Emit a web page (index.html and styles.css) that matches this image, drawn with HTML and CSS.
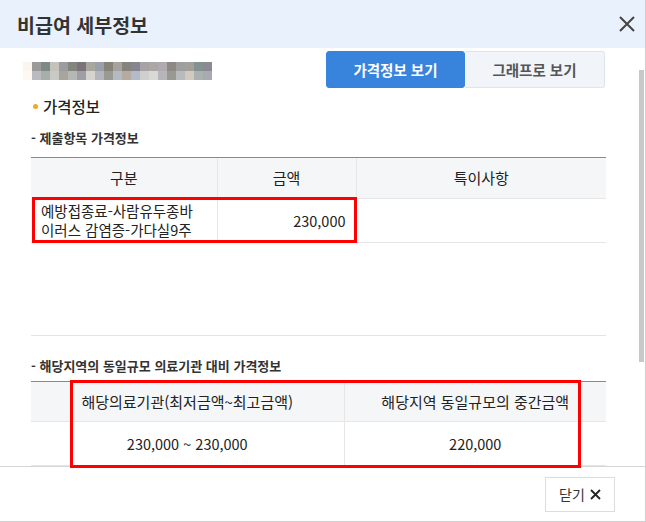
FILE: index.html
```html
<!DOCTYPE html>
<html lang="ko">
<head>
<meta charset="utf-8">
<title>비급여 세부정보</title>
<link rel="stylesheet" href="styles.css">
</head>
<body>
<div class="modal">
  <header class="modal-head">
    <h1 class="modal-title">비급여 세부정보</h1>
    <button class="close-btn" aria-label="닫기">
      <svg width="16" height="16" viewBox="0 0 16 16"><path d="M1 1L15 15M15 1L1 15" stroke="#444" stroke-width="2" fill="none"/></svg>
    </button>
  </header>
  <main class="modal-body">
    <div class="top-row">
      <div class="mosaic" aria-hidden="true"></div>
      <div class="tabs">
        <button class="tab active">가격정보 보기</button>
        <button class="tab">그래프로 보기</button>
      </div>
    </div>
    <h2 class="sec-title">가격정보</h2>
    <h3 class="sub-title">- 제출항목 가격정보</h3>
    <div class="table-wrap">
      <table class="grid t1">
        <colgroup><col class="c1"><col class="c2"><col></colgroup>
        <thead>
          <tr><th>구분</th><th>금액</th><th>특이사항</th></tr>
        </thead>
        <tbody>
          <tr><td class="name">예방접종료-사람유두종바<br>이러스 감염증-가다실9주</td><td class="amt">230,000</td><td></td></tr>
        </tbody>
      </table>
    </div>
    <h3 class="sub-title second">- 해당지역의 동일규모 의료기관 대비 가격정보</h3>
    <table class="grid t2">
      <colgroup><col class="d1"><col></colgroup>
      <thead>
        <tr><th>해당의료기관(최저금액~최고금액)</th><th>해당지역 동일규모의 중간금액</th></tr>
      </thead>
      <tbody>
        <tr><td>230,000 ~ 230,000</td><td>220,000</td></tr>
      </tbody>
    </table>
  </main>
  <footer class="modal-foot">
    <button class="btn-close">닫기
      <svg width="11" height="11" viewBox="0 0 11 11"><path d="M1 1L10 10M10 1L1 10" stroke="#222" stroke-width="1.8" fill="none"/></svg>
    </button>
  </footer>
  <div class="scroll-thumb"></div>
  <div class="mark mark-1"></div>
  <div class="mark mark-2"></div>
</div>
</body>
</html>
```
FILE: styles.css
```css
* { box-sizing: border-box; margin: 0; padding: 0; }
html, body { width: 646px; height: 522px; overflow: hidden; }
body {
  font-family: "Noto Sans CJK KR", "Noto Sans", sans-serif;
  color: #222;
  background: #fff;
}
button { font-family: inherit; cursor: pointer; }

.modal {
  position: relative;
  width: 646px;
  height: 522px;
  display: flex;
  flex-direction: column;
  background: #fff;
  border-right: 1px solid #cfcfcf;
  border-bottom: 1px solid #cfcfcf;
}

.modal-head {
  flex: none;
  height: 48px;
  background: #e9f1fc;
  display: flex;
  align-items: center;
  justify-content: space-between;
  padding: 0 8px 0 17px;
}
.modal-title {
  font-size: 19.5px;
  font-weight: 700;
  color: #333;
}
.close-btn {
  width: 20px;
  height: 20px;
  border: 0;
  background: none;
  display: flex;
  align-items: center;
  justify-content: center;
}

.modal-body {
  flex: 1;
  overflow: hidden;
  padding: 3px 39px 0 31px;
}

.top-row {
  display: flex;
  justify-content: space-between;
  height: 37px;
}
.mosaic {
  width: 189px;
  height: 18px;
  margin: 11px 0 0 -8px;
  background:
    linear-gradient(to right,
      #fbf5ee 0 9px, #9a9a9a 9px 18px, #7b8a85 18px 27px, #c5c2bc 27px 36px,
      #9c9c9e 36px 45px, #858580 45px 54px, #7a7478 54px 63px, #a9a6a0 63px 72px,
      #9aa0aa 72px 81px, #868478 81px 90px, #a7a29e 90px 99px, #85837c 99px 108px,
      #858590 108px 117px, #a7a3a5 117px 126px, #aba7a2 126px 135px, #b0aab0 135px 144px,
      #8c8884 144px 153px, #a09d9e 153px 162px, #a3a099 162px 171px, #839290 171px 180px,
      #8c8896 180px 189px) top left / 189px 9px no-repeat,
    linear-gradient(to right,
      #fdf8f2 0 9px, #b8bbbf 9px 18px, #a9aeab 18px 27px, #c9c9c6 27px 36px,
      #a8a49e 36px 45px, #b6b8b5 45px 54px, #9e9ea6 54px 63px, #d4d3ce 63px 72px,
      #b3b6bc 72px 81px, #9a9a92 81px 90px, #b4bac2 90px 99px, #b5aba0 99px 108px,
      #b5bac8 108px 117px, #cfcfd0 117px 126px, #dbd9d5 126px 135px, #b6b5ba 135px 144px,
      #999993 144px 153px, #b7bbbe 153px 162px, #d2cac0 162px 171px, #abb1b0 171px 180px,
      #a9a9b0 180px 189px) bottom left / 189px 9px no-repeat;
}
.tabs {
  display: flex;
  margin-right: 1px;
}
.tab {
  height: 37px;
  font-size: 14.5px;
  font-weight: 700;
  border: 1px solid #dde4eb;
  background: #f1f5f9;
  color: #555;
}
.tab.active {
  width: 139px;
  background: #3883db;
  border-color: #3883db;
  color: #fff;
  border-radius: 3px;
}
.tab:not(.active) {
  width: 140px;
  border-left: 0;
  border-radius: 0 3px 3px 0;
}

.sec-title {
  position: relative;
  margin-top: 8px;
  height: 20px;
  line-height: 20px;
  font-size: 15.5px;
  font-weight: 500;
  color: #222;
  padding-left: 12px;
}
.sec-title::before {
  content: "";
  position: absolute;
  left: 2px;
  top: 8px;
  width: 5px;
  height: 5px;
  border-radius: 50%;
  background: #f5a623;
}

.sub-title {
  margin-top: 12px;
  height: 20px;
  line-height: 20px;
  font-size: 13px;
  font-weight: 700;
  color: #333;
}
.sub-title.second { margin-top: 20px; }

.table-wrap {
  margin-top: 9px;
  height: 179px;
  border-top: 1px solid #8a8a8a;
  border-bottom: 1px solid #e4e4e4;
}

.grid {
  width: 100%;
  border-collapse: collapse;
  table-layout: fixed;
}
.grid th {
  height: 40px;
  background: #f5f6f8;
  font-size: 15px;
  font-weight: 400;
  color: #222;
  border-bottom: 1px solid #e6e6e6;
  text-align: center;
  padding: 0;
}
.grid td {
  font-size: 14.5px;
  color: #222;
  border-bottom: 1px solid #e6e6e6;
  padding: 0 10px;
  height: 44px;
}
.grid th + th, .grid td + td { border-left: 1px solid #e6e6e6; }

.t1 col.c1 { width: 186px; }
.t1 col.c2 { width: 139px; }
.t1 td.name { line-height: 19px; padding-right: 4px; }
.t1 td.amt { text-align: right; }

.t2 {
  margin-top: 5px;
  border-top: 1px solid #8a8a8a;
}
.t2 col.d1 { width: 313px; }
.t2 td { text-align: center; }

.modal-foot {
  flex: none;
  height: 55px;
  border-top: 1px solid #d6d6d6;
  display: flex;
  justify-content: flex-end;
  align-items: center;
  padding-right: 30px;
}
.btn-close {
  width: 70px;
  height: 35px;
  border: 1px solid #dcdcdc;
  background: #fff;
  font-size: 14px;
  color: #333;
  display: inline-flex;
  align-items: center;
  justify-content: center;
  gap: 5px;
}

.scroll-thumb {
  position: absolute;
  right: 1px;
  top: 70px;
  width: 5px;
  height: 292px;
  background: #c9c9c9;
}

.mark {
  position: absolute;
  border: 3px solid #f00;
  pointer-events: none;
}
.mark-1 { left: 32px; top: 197px; width: 325px; height: 46px; }
.mark-2 { left: 70px; top: 380px; width: 511px; height: 88px; }
```
